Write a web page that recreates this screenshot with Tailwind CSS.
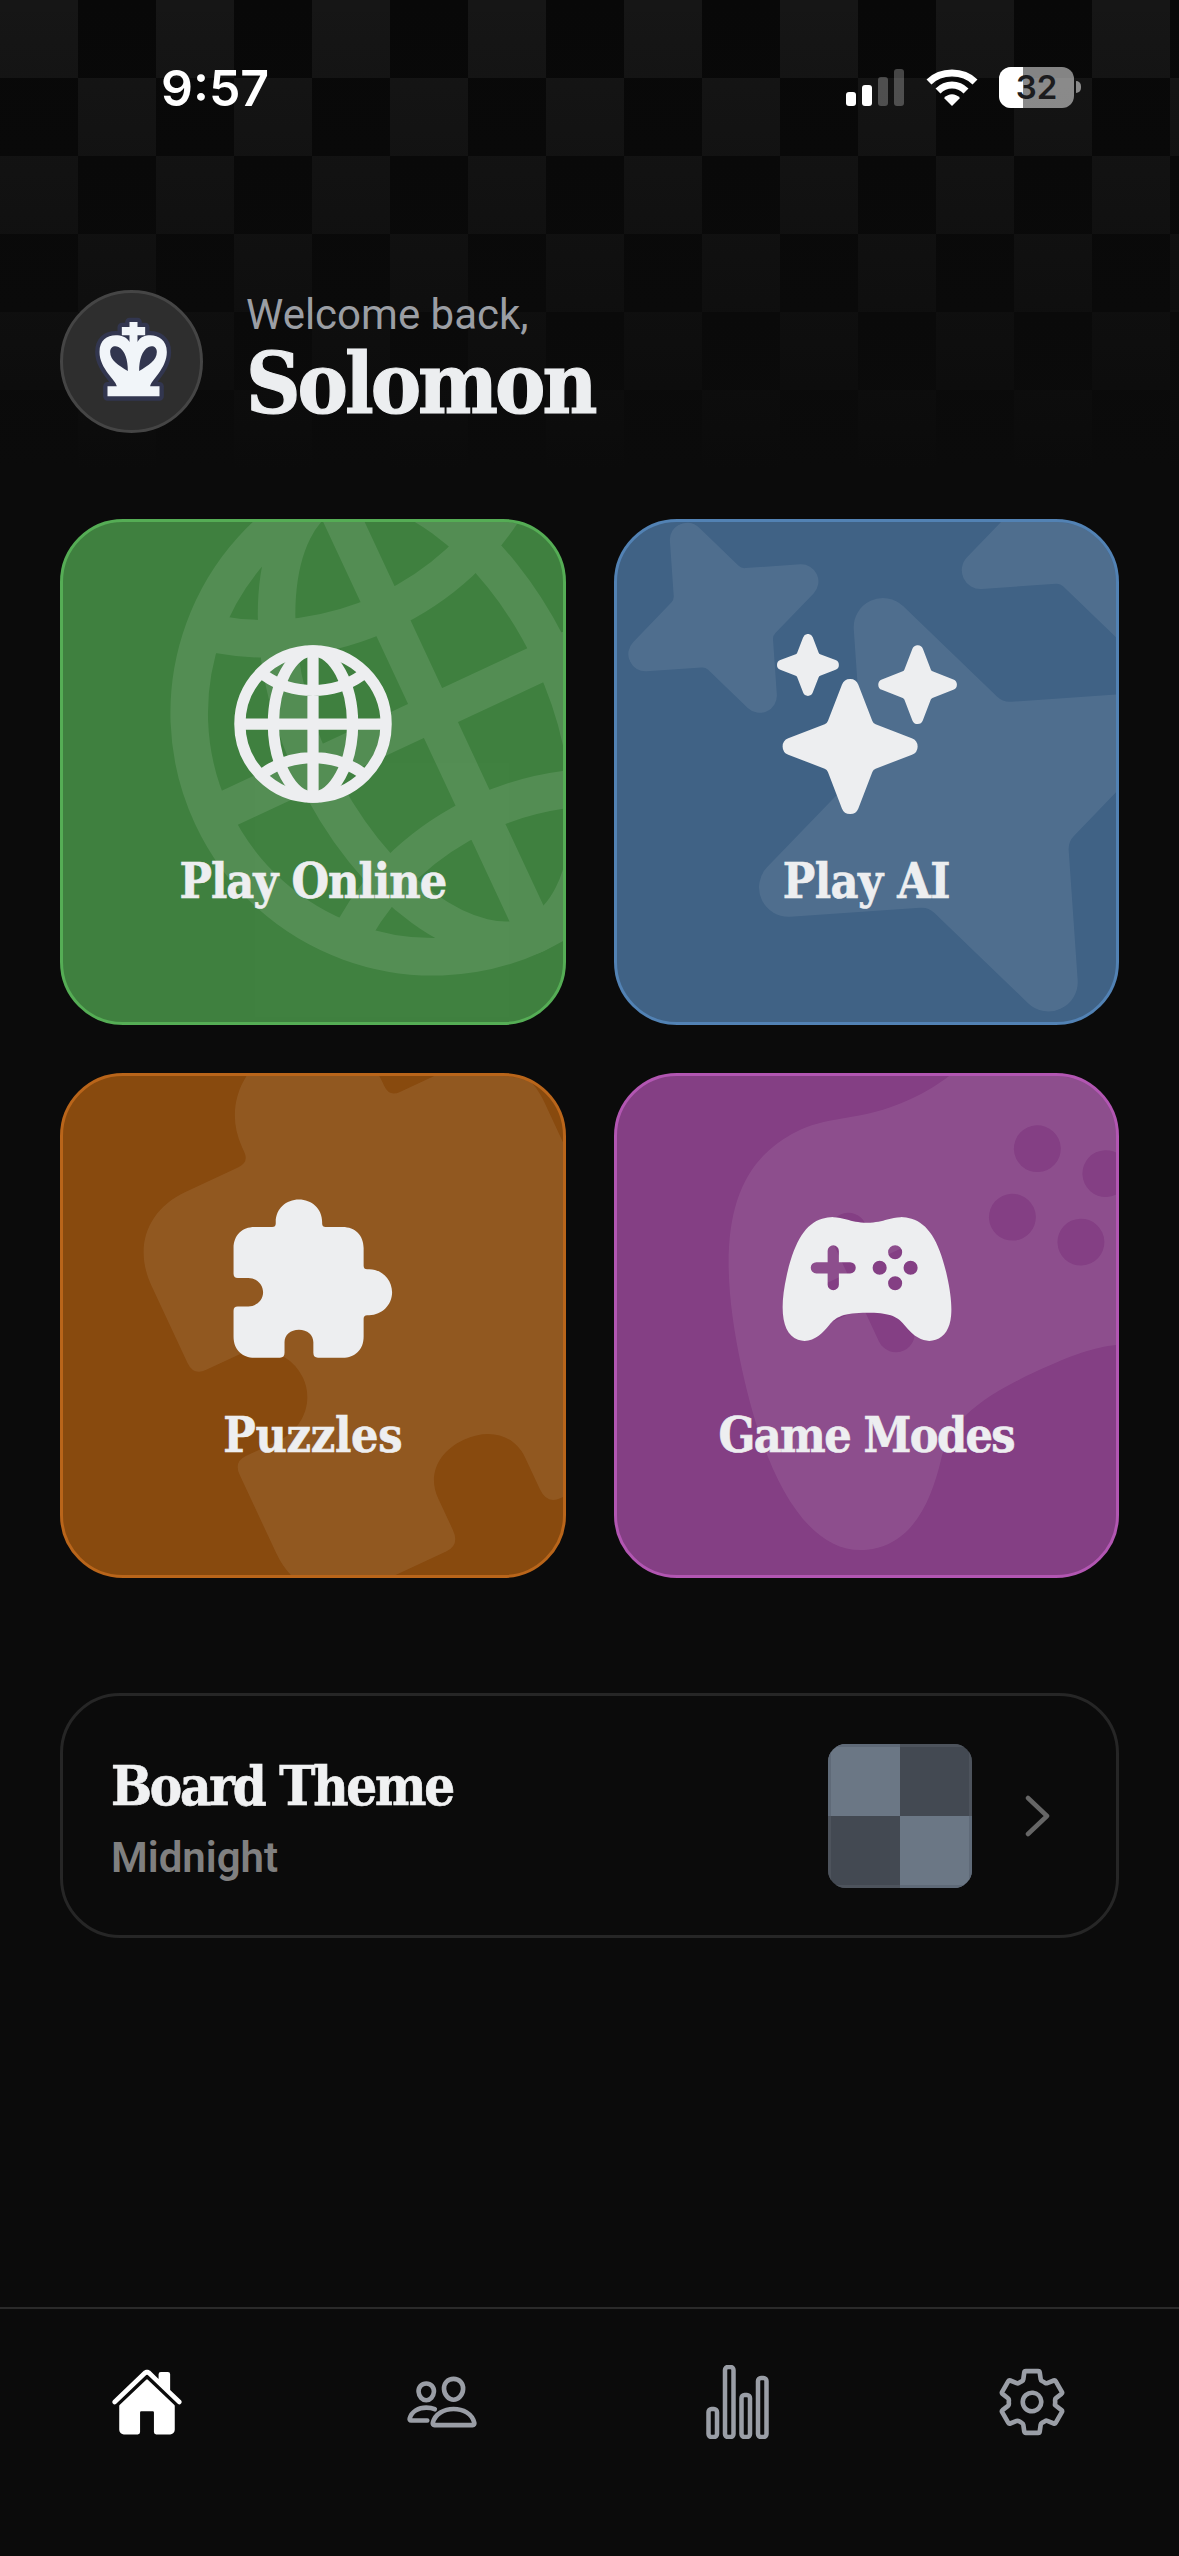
<!DOCTYPE html>
<html>
<head>
<meta charset="utf-8">
<script src="https://cdn.jsdelivr.net/npm/@tailwindcss/browser@4"></script>
</head>
<body class="bg-[#0b0b0b]">
<div class="relative w-[1179px] h-[2556px] overflow-hidden bg-[#0b0b0b] flex flex-col font-['Roboto',sans-serif]">

  <!-- checker backdrop -->
  <div class="absolute left-0 top-0 w-full h-[470px] bg-[conic-gradient(#080808_25%,#161616_0_50%,#080808_0_75%,#161616_0)] bg-[size:156px_156px]"></div>
  <div class="absolute left-0 top-0 w-full h-[470px] bg-gradient-to-b from-[#0b0b0b]/0 to-[#0b0b0b]"></div>

  <!-- status bar -->
  <div class="relative h-[178px] shrink-0">
    <div class="absolute left-[161px] top-[60px] text-[50px] leading-[56px] font-semibold text-white font-['Inter',sans-serif]">9:57</div>
    <div class="absolute left-[846px] top-[67px] flex items-end gap-[6px] h-[39px]">
      <div class="w-[10px] h-[14px] rounded-[3px] bg-white"></div>
      <div class="w-[10px] h-[21px] rounded-[3px] bg-white"></div>
      <div class="w-[10px] h-[29px] rounded-[3px] bg-white/25"></div>
      <div class="w-[10px] h-[37px] rounded-[3px] bg-white/25"></div>
    </div>
    <svg class="absolute left-[925px] top-[67px]" width="54" height="40" viewBox="0 0 54 40" fill="none" stroke="#fff" stroke-width="7">
      <path d="M4 15 C16 3 38 3 50 15"/>
      <path d="M13 24 C21 16 33 16 41 24"/>
      <path d="M19 31 L27 39 L35 31 C30 26 24 26 19 31Z" fill="#fff" stroke="none"/>
    </svg>
    <div class="absolute left-[999px] top-[67px] w-[75px] h-[41px] rounded-[12px] overflow-hidden flex bg-white/50">
      <div class="w-[24px] h-full bg-white"></div>
    </div>
    <div class="absolute left-[999px] top-[67px] w-[75px] h-[41px] flex items-center justify-center text-[33px] font-semibold text-[#1c1c1e] font-['Inter',sans-serif]">32</div>
    <div class="absolute left-[1076px] top-[81px] w-[5px] h-[12px] rounded-r-full bg-white/50"></div>
  </div>

  <!-- header -->
  <div class="relative flex items-center gap-[43px] pl-[60px] h-[143px] mt-[112px] shrink-0">
    <div class="w-[143px] h-[143px] rounded-full bg-[#2e2e2e] border-[3px] border-[#454545] flex items-center justify-center shrink-0">
      <svg class="ml-[3px] mb-[5px]" width="77" height="85" viewBox="135 110 230 255">
        <path d="M172 348H328V318H300C302 300 350 265 350 215C350 180 325 165 300 165C285 165 270 170 262 185V165H285V140H262V125H238V140H215V165H238V185C230 170 212 165 197 165C170 165 148 180 148 215C148 265 198 300 200 318H172Z" fill="#f1f5f9" stroke="#32364f" stroke-width="26" paint-order="stroke" stroke-linejoin="round"/>
        <path d="M180 215C180 200 192 195 205 200C225 210 233 240 233 272C205 255 180 240 180 215Z M320 215C320 200 308 195 295 200C275 210 267 240 267 272C295 255 320 240 320 215Z" fill="#32364f"/>
      </svg>
    </div>
    <div class="flex flex-col mt-[-2px]">
      <div class="text-[42px] leading-[46px] font-normal text-[#9b9ea4]">Welcome back,</div>
      <div class="text-[84px] leading-[92px] font-bold tracking-[-3px] text-[#eceef0] [-webkit-text-stroke:1.2px_#eceef0] font-['DejaVu_Serif',serif] font-stretch-condensed">Solomon</div>
    </div>
  </div>

  <!-- grid -->
  <div class="relative grid grid-cols-2 gap-x-[48px] gap-y-[48px] px-[60px] mt-[86px] shrink-0">

    <div class="relative h-[505.5px] rounded-[63px] border-[3px] border-[#55ad55] bg-[#408140] overflow-hidden flex flex-col items-center pt-[112px]">
      <svg class="absolute left-[70px] top-[-109px] rotate-[-25deg] opacity-10" width="600" height="600" viewBox="0 0 512 512" fill="none" stroke="#fff" stroke-width="32">
        <path d="M256 48C141.13 48 48 141.13 48 256s93.13 208 208 208 208-93.13 208-208S370.87 48 256 48z"/>
        <path d="M256 48c-58.07 0-112.67 93.13-112.67 208S197.93 464 256 464s112.67-93.13 112.67-208S314.07 48 256 48z"/>
        <path d="M117.33 117.33c38.24 27.15 86.38 43.34 138.67 43.34s100.43-16.19 138.67-43.34M394.67 394.67c-38.24-27.15-86.38-43.34-138.67-43.34s-100.43 16.19-138.67 43.34M256 48v416M464 256H48"/>
      </svg>
      <svg class="relative" width="180" height="180" viewBox="0 0 512 512" fill="none" stroke="#edeef0" stroke-width="32">
        <path d="M256 48C141.13 48 48 141.13 48 256s93.13 208 208 208 208-93.13 208-208S370.87 48 256 48z"/>
        <path d="M256 48c-58.07 0-112.67 93.13-112.67 208S197.93 464 256 464s112.67-93.13 112.67-208S314.07 48 256 48z"/>
        <path d="M117.33 117.33c38.24 27.15 86.38 43.34 138.67 43.34s100.43-16.19 138.67-43.34M394.67 394.67c-38.24-27.15-86.38-43.34-138.67-43.34s-100.43 16.19-138.67 43.34M256 48v416M464 256H48"/>
      </svg>
      <div class="relative mt-[37px] text-[48px] leading-[60px] font-bold tracking-[-1px] text-[#edeef0] [-webkit-text-stroke:0.6px_#edeef0] font-['DejaVu_Serif',serif] font-stretch-condensed">Play Online</div>
    </div>

    <div class="relative h-[505.5px] rounded-[63px] border-[3px] border-[#5282b4] bg-[#406285] overflow-hidden flex flex-col items-center pt-[112px]">
      <svg class="absolute left-[68px] top-[-109px] rotate-[-25deg]" width="600" height="600" viewBox="0 0 512 512" fill="#fff" fill-opacity="0.08">
        <path d="M208 512a24.84 24.84 0 01-23.34-16l-39.84-103.6a16.06 16.06 0 00-9.19-9.19L32 343.34a25 25 0 010-46.68l103.6-39.84a16.06 16.06 0 009.19-9.19L184.66 144a25 25 0 0146.68 0l39.84 103.6a16.06 16.06 0 009.19 9.19l103 39.63a25.49 25.49 0 0116.63 24.1 24.82 24.82 0 01-16 22.82l-103.6 39.84a16.06 16.06 0 00-9.19 9.19L231.34 496A24.84 24.84 0 01208 512zM88 176a14.67 14.67 0 01-13.69-9.4l-16.86-43.84a7.28 7.28 0 00-4.21-4.21L9.4 101.69a14.67 14.67 0 010-27.38l43.84-16.86a7.31 7.31 0 004.21-4.21L74.16 9.79A15 15 0 0186.23.11a14.67 14.67 0 0115.46 9.29l16.86 43.84a7.31 7.31 0 004.21 4.21l43.84 16.86a14.67 14.67 0 019.4 13.69 14.67 14.67 0 01-9.4 13.69l-43.84 16.86a7.28 7.28 0 00-4.21 4.21l-16.86 43.84A14.67 14.67 0 0188 176zM400 256a16 16 0 01-14.93-10.26l-22.84-59.37a8 8 0 00-4.6-4.6l-59.37-22.84a16 16 0 010-29.86l59.37-22.84a8 8 0 004.6-4.6l22.67-58.95a16.45 16.45 0 0113.17-10.57 16 16 0 0116.86 10.15l22.84 59.37a8 8 0 004.6 4.6l59.37 22.84a16 16 0 0110 15.1 16 16 0 01-10.26 14.76l-59.37 22.84a8 8 0 00-4.6 4.6l-22.84 59.37A16 16 0 01400 256z"/>
      </svg>
      <svg class="relative ml-[2px]" width="180" height="180" viewBox="0 0 512 512" fill="#edeef0">
        <path d="M208 512a24.84 24.84 0 01-23.34-16l-39.84-103.6a16.06 16.06 0 00-9.19-9.19L32 343.34a25 25 0 010-46.68l103.6-39.84a16.06 16.06 0 009.19-9.19L184.66 144a25 25 0 0146.68 0l39.84 103.6a16.06 16.06 0 009.19 9.19l103 39.63a25.49 25.49 0 0116.63 24.1 24.82 24.82 0 01-16 22.82l-103.6 39.84a16.06 16.06 0 00-9.19 9.19L231.34 496A24.84 24.84 0 01208 512zM88 176a14.67 14.67 0 01-13.69-9.4l-16.86-43.84a7.28 7.28 0 00-4.21-4.21L9.4 101.69a14.67 14.67 0 010-27.38l43.84-16.86a7.31 7.31 0 004.21-4.21L74.16 9.79A15 15 0 0186.23.11a14.67 14.67 0 0115.46 9.29l16.86 43.84a7.31 7.31 0 004.21 4.21l43.84 16.86a14.67 14.67 0 019.4 13.69 14.67 14.67 0 01-9.4 13.69l-43.84 16.86a7.28 7.28 0 00-4.21 4.21l-16.86 43.84A14.67 14.67 0 0188 176zM400 256a16 16 0 01-14.93-10.26l-22.84-59.37a8 8 0 00-4.6-4.6l-59.37-22.84a16 16 0 010-29.86l59.37-22.84a8 8 0 004.6-4.6l22.67-58.95a16.45 16.45 0 0113.17-10.57 16 16 0 0116.86 10.15l22.84 59.37a8 8 0 004.6 4.6l59.37 22.84a16 16 0 0110 15.1 16 16 0 01-10.26 14.76l-59.37 22.84a8 8 0 00-4.6 4.6l-22.84 59.37A16 16 0 01400 256z"/>
      </svg>
      <div class="relative mt-[37px] text-[48px] leading-[60px] font-bold tracking-[-0.5px] text-[#edeef0] [-webkit-text-stroke:0.6px_#edeef0] font-['DejaVu_Serif',serif] font-stretch-condensed">Play AI</div>
    </div>

    <div class="relative h-[505.5px] rounded-[63px] border-[3px] border-[#b9651a] bg-[#884a0e] overflow-hidden flex flex-col items-center pt-[113px]">
      <svg class="absolute left-[72px] top-[-109px] rotate-[-25deg]" width="600" height="600" viewBox="0 0 512 512" fill="#fff" fill-opacity="0.08">
        <path d="M90 108L140 108Q150 108 150 98L150 94C150 56 180 30 216 30C252 30 282 56 282 94L282 98Q282 108 292 108L340 108C376 108 400 132 400 168L400 218Q400 228 410 228L416 228C452 228 481 258 481 294C481 330 452 359 416 359L410 359Q400 359 400 369L400 420C400 456 376 480 340 480L270 480Q257 480 257 466L257 436C257 414 240 400 216 400C192 400 175 414 175 436L175 466Q175 480 162 480L90 480C54 480 30 456 30 420L30 346Q30 334 42 334L72 334C96 334 114 316 114 294C114 272 96 253 72 253L42 253Q30 253 30 241L30 168C30 132 54 108 90 108Z"/>
      </svg>
      <svg class="relative" width="180" height="180" viewBox="0 0 512 512" fill="#edeef0">
        <path d="M90 108L140 108Q150 108 150 98L150 94C150 56 180 30 216 30C252 30 282 56 282 94L282 98Q282 108 292 108L340 108C376 108 400 132 400 168L400 218Q400 228 410 228L416 228C452 228 481 258 481 294C481 330 452 359 416 359L410 359Q400 359 400 369L400 420C400 456 376 480 340 480L270 480Q257 480 257 466L257 436C257 414 240 400 216 400C192 400 175 414 175 436L175 466Q175 480 162 480L90 480C54 480 30 456 30 420L30 346Q30 334 42 334L72 334C96 334 114 316 114 294C114 272 96 253 72 253L42 253Q30 253 30 241L30 168C30 132 54 108 90 108Z"/>
      </svg>
      <div class="relative mt-[36px] text-[48px] leading-[60px] font-bold tracking-[-0.3px] text-[#edeef0] [-webkit-text-stroke:0.6px_#edeef0] font-['DejaVu_Serif',serif] font-stretch-condensed">Puzzles</div>
    </div>

    <div class="relative h-[505.5px] rounded-[63px] border-[3px] border-[#b256b2] bg-[#843f84] overflow-hidden flex flex-col items-center pt-[113px]">
      <svg class="absolute left-[73px] top-[-107px] rotate-[-25deg]" width="600" height="600" viewBox="0 0 512 512" fill="#fff" fill-opacity="0.08">
        <path d="M483.13 245.38C461.92 149.49 430 98.31 382.65 84.33A107.13 107.13 0 00352 80c-13.71 0-25.65 3.34-38.28 6.88C298.5 91.15 281.21 96 256 96s-42.51-4.84-57.76-9.11C185.6 83.34 173.67 80 160 80a115.74 115.74 0 00-31.73 4.32c-47.1 13.92-79 65.08-100.52 161C4.61 348.54 16 413.71 59.69 428.83a56.62 56.62 0 0018.64 3.22c29.93 0 53.93-24.93 70.33-45.34 18.53-23.1 40.22-34.82 107.34-34.82 59.95 0 84.76 8.13 106.19 34.82 13.47 16.78 26.2 28.52 38.9 35.91 16.89 9.82 33.77 12 50.16 6.37 25.82-8.81 40.62-32.1 44-69.24 2.57-28.48-1.39-65.89-12.12-114.37zM208 240h-32v32a16 16 0 01-32 0v-32h-32a16 16 0 010-32h32v-32a16 16 0 0132 0v32h32a16 16 0 010 32zm84 4a20 20 0 1120-20 20 20 0 01-20 20zm44 44a20 20 0 1120-19.95A20 20 0 01336 288zm0-88a20 20 0 1120-20 20 20 0 01-20 20zm44 44a20 20 0 1120-20 20 20 0 01-20 20z"/>
      </svg>
      <svg class="relative ml-[2px]" width="180" height="180" viewBox="0 0 512 512" fill="#edeef0">
        <path d="M483.13 245.38C461.92 149.49 430 98.31 382.65 84.33A107.13 107.13 0 00352 80c-13.71 0-25.65 3.34-38.28 6.88C298.5 91.15 281.21 96 256 96s-42.51-4.84-57.76-9.11C185.6 83.34 173.67 80 160 80a115.74 115.74 0 00-31.73 4.32c-47.1 13.92-79 65.08-100.52 161C4.61 348.54 16 413.71 59.69 428.83a56.62 56.62 0 0018.64 3.22c29.93 0 53.93-24.93 70.33-45.34 18.53-23.1 40.22-34.82 107.34-34.82 59.95 0 84.76 8.13 106.19 34.82 13.47 16.78 26.2 28.52 38.9 35.91 16.89 9.82 33.77 12 50.16 6.37 25.82-8.81 40.62-32.1 44-69.24 2.57-28.48-1.39-65.89-12.12-114.37zM208 240h-32v32a16 16 0 01-32 0v-32h-32a16 16 0 010-32h32v-32a16 16 0 0132 0v32h32a16 16 0 010 32zm84 4a20 20 0 1120-20 20 20 0 01-20 20zm44 44a20 20 0 1120-19.95A20 20 0 01336 288zm0-88a20 20 0 1120-20 20 20 0 01-20 20zm44 44a20 20 0 1120-20 20 20 0 01-20 20z"/>
      </svg>
      <div class="relative mt-[36px] text-[48px] leading-[60px] font-bold tracking-[-1.6px] text-[#edeef0] [-webkit-text-stroke:0.6px_#edeef0] font-['DejaVu_Serif',serif] font-stretch-condensed">Game Modes</div>
    </div>
  </div>

  <!-- board theme -->
  <div class="relative mx-[60px] mt-[115px] h-[245px] rounded-[60px] border-[3px] border-[#262626] flex items-center pl-[48px] pr-[66px] shrink-0">
    <div class="flex flex-col flex-1 pt-[5px]">
      <div class="text-[54px] leading-[64px] font-bold tracking-[-2.2px] text-[#f0f1f2] [-webkit-text-stroke:0.7px_#f0f1f2] font-['DejaVu_Serif',serif] font-stretch-condensed">Board Theme</div>
      <div class="mt-[15px] text-[42px] leading-[50px] font-semibold text-[#808080]">Midnight</div>
    </div>
    <div class="w-[144px] h-[144px] rounded-[18px] overflow-hidden grid grid-cols-2 grid-rows-2 mr-[52px]">
      <div class="bg-[#6b7785] border-t-[3px] border-l-[3px] border-[#5f6a78]"></div>
      <div class="bg-[#434952] border-t-[3px] border-r-[3px] border-[#4d535c]"></div>
      <div class="bg-[#434952] border-b-[3px] border-l-[3px] border-[#4d535c]"></div>
      <div class="bg-[#6b7785] border-b-[3px] border-r-[3px] border-[#5f6a78]"></div>
    </div>
    <svg width="26" height="42" viewBox="0 0 26 42" fill="none" stroke="#666" stroke-width="4.5" stroke-linecap="round" stroke-linejoin="round"><path d="M4 3L23 21L4 39"/></svg>
  </div>

  <!-- nav -->
  <div class="absolute left-0 right-0 top-[2307px] bottom-0 border-t-[2px] border-[#2a2a2a] grid grid-cols-4 items-start pt-[56px]">
    <div class="flex justify-center">
      <svg width="74" height="74" viewBox="0 0 512 512" fill="#fff">
        <path d="M261.56 101.28a8 8 0 00-11.06 0L66.4 277.15a8 8 0 00-2.47 5.79L63.9 448a32 32 0 0032 32H192a16 16 0 0016-16V328a8 8 0 018-8h80a8 8 0 018 8v136a16 16 0 0016 16h96.06a32 32 0 0032-32V282.94a8 8 0 00-2.47-5.79z"/>
        <path d="M490.91 244.15l-74.8-71.56V64a16 16 0 00-16-16h-48a16 16 0 00-16 16v32l-57.92-55.38C272.77 35.14 264.71 32 256 32c-8.68 0-16.72 3.14-22.14 8.63l-212.7 203.5c-6.22 6-7 15.87-1.34 22.37A16 16 0 0043 267.56L250.5 69.28a8 8 0 0111.06 0l207.52 198.28a16 16 0 0022.59-.44c6.14-6.36 5.63-16.86-.76-22.97z"/>
      </svg>
    </div>
    <div class="flex justify-center">
      <svg width="74" height="74" viewBox="0 0 512 512" fill="none" stroke="#9a9ea6" stroke-width="32" stroke-linecap="round" stroke-linejoin="round">
        <path d="M402 168c-2.93 40.67-33.1 72-66 72s-63.12-31.32-66-72c-3-42.31 26.37-72 66-72s69 30.46 66 72z"/>
        <path d="M336 304c-65.17 0-127.84 32.37-143.54 95.41-2.08 8.34 3.15 16.59 11.72 16.59h263.65c8.57 0 13.77-8.25 11.72-16.59C463.85 335.36 401.18 304 336 304z"/>
        <path d="M200 185.94c-2.34 32.48-26.72 58.06-53 58.06s-50.7-25.57-53-58.06C91.61 152.15 115.34 128 147 128s55.39 24.77 53 57.94z"/>
        <path d="M206 306c-18.05-8.27-37.93-11.45-59-11.45-52 0-102.1 25.85-114.65 76.2-1.65 6.66 2.53 13.25 9.37 13.25H154"/>
      </svg>
    </div>
    <div class="flex justify-center">
      <svg width="74" height="74" viewBox="1 1 74 74" fill="none" stroke="#9a9ea6" stroke-width="4.5">
        <rect x="9.5" y="45" width="8.5" height="28" rx="3"/>
        <rect x="26" y="3" width="8.5" height="70" rx="3"/>
        <rect x="42.5" y="31" width="8.5" height="42" rx="3"/>
        <rect x="59" y="14" width="8.5" height="59" rx="3"/>
      </svg>
    </div>
    <div class="flex justify-center">
      <svg width="74" height="74" viewBox="0 0 512 512" fill="none" stroke="#9a9ea6" stroke-width="32" stroke-linecap="round" stroke-linejoin="round">
        <path d="M262.29 192.31a64 64 0 1057.4 57.4 64.13 64.13 0 00-57.4-57.4zM416.39 256a154.34 154.34 0 01-1.53 20.79l45.21 35.46a10.81 10.81 0 012.45 13.75l-42.77 74a10.81 10.81 0 01-13.14 4.59l-44.9-18.08a16.11 16.11 0 00-15.17 1.75A164.48 164.48 0 01325 400.8a15.94 15.94 0 00-8.82 12.14l-6.73 47.89a11.08 11.08 0 01-10.68 9.17h-85.54a11.11 11.11 0 01-10.69-8.87l-6.72-47.82a16.07 16.07 0 00-9-12.22 155.3 155.3 0 01-21.46-12.57 16 16 0 00-15.11-1.71l-44.89 18.07a10.81 10.81 0 01-13.14-4.58l-42.77-74a10.8 10.8 0 012.45-13.75l38.21-30a16.05 16.05 0 006-14.08c-.36-4.17-.58-8.33-.58-12.5s.21-8.27.58-12.35a16 16 0 00-6.07-13.94l-38.19-30A10.81 10.81 0 0149.48 186l42.77-74a10.81 10.81 0 0113.14-4.59l44.9 18.08a16.11 16.11 0 0015.17-1.75A164.48 164.48 0 01187 111.2a15.94 15.94 0 008.82-12.14l6.73-47.89A11.08 11.08 0 01213.23 42h85.54a11.11 11.11 0 0110.69 8.87l6.72 47.82a16.07 16.07 0 009 12.22 155.3 155.3 0 0121.46 12.57 16 16 0 0015.11 1.71l44.89-18.07a10.81 10.81 0 0113.14 4.58l42.77 74a10.8 10.8 0 01-2.45 13.75l-38.21 30a16.05 16.05 0 00-6.07 14.08c.33 4.14.55 8.3.55 12.47z"/>
      </svg>
    </div>
  </div>
</div>
</body>
</html>
